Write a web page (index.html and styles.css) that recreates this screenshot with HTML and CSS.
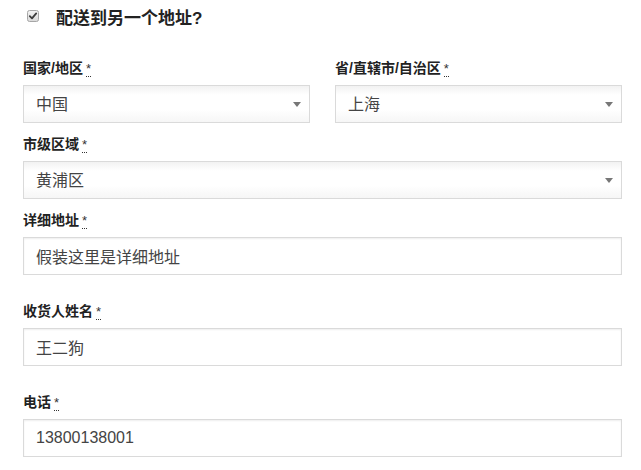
FILE: index.html
```html
<!DOCTYPE html>
<html lang="zh-CN">
<head>
    <meta charset="UTF-8">
    <meta name="viewport" content="width=device-width, initial-scale=1.0">
    <title>配送地址</title>
    <link rel="stylesheet" href="styles.css">
</head>
<body>
    <div class="shipping">
        <h3 class="ship-toggle">
            <label class="ship-check">
                <span class="checkbox">
                    <svg width="12" height="12" viewBox="0 0 12 12">
                        <defs>
                            <linearGradient id="cb" x1="0" y1="0" x2="0" y2="1">
                                <stop offset="0" stop-color="#f4f4f4"/>
                                <stop offset="1" stop-color="#d9d9d9"/>
                            </linearGradient>
                        </defs>
                        <rect x="0.5" y="0.5" width="11" height="11" rx="2" fill="url(#cb)" stroke="#a6a6a6"/>
                        <path d="M2.8 6.2 L5 8.4 L9.2 3.4" fill="none" stroke="#3c3c3c" stroke-width="1.8" stroke-linecap="round" stroke-linejoin="round"/>
                    </svg>
                </span>
                <span>配送到另一个地址?</span>
            </label>
        </h3>

        <form class="fields">
            <div class="row-two">
                <div class="field">
                    <label for="country">国家/地区<abbr class="required" title="必填">*</abbr></label>
                    <div class="select">
                        <select id="country"><option>中国</option></select>
                    </div>
                </div>
                <div class="field">
                    <label for="state">省/直辖市/自治区<abbr class="required" title="必填">*</abbr></label>
                    <div class="select">
                        <select id="state"><option>上海</option></select>
                    </div>
                </div>
            </div>

            <div class="field">
                <label for="city">市级区域<abbr class="required" title="必填">*</abbr></label>
                <div class="select">
                    <select id="city"><option>黄浦区</option></select>
                </div>
            </div>

            <div class="field field-wide">
                <label for="address">详细地址<abbr class="required" title="必填">*</abbr></label>
                <input type="text" id="address" value="假装这里是详细地址">
            </div>

            <div class="field field-wide">
                <label for="name">收货人姓名<abbr class="required" title="必填">*</abbr></label>
                <input type="text" id="name" value="王二狗">
            </div>

            <div class="field">
                <label for="phone">电话<abbr class="required" title="必填">*</abbr></label>
                <input type="text" id="phone" value="13800138001">
            </div>
        </form>
    </div>
</body>
</html>
```

FILE: styles.css
```css
body {
    margin: 0;
    font-family: "Liberation Sans", "Noto Sans CJK SC", sans-serif;
    color: #333;
    background: #fff;
}
.shipping {
    padding: 0 19px 0 23px;
}
.ship-toggle {
    margin: 0 0 26px;
    height: 32px;
    display: flex;
    align-items: center;
    font-size: 17px;
    font-weight: bold;
    color: #222;
}
.ship-check {
    display: flex;
    align-items: center;
    gap: 17px;
}
.checkbox {
    display: flex;
    margin-left: 4px;
}
.row-two {
    display: grid;
    grid-template-columns: 1fr 1fr;
    column-gap: 25px;
}
.field {
    margin-bottom: 11px;
}
.field-wide {
    margin-bottom: 26px;
}
.field label {
    display: block;
    height: 20px;
    font-size: 14px;
    font-weight: bold;
    line-height: 20px;
    margin-bottom: 7px;
    color: #222;
    white-space: nowrap;
}
abbr.required {
    margin-left: 3px;
    text-decoration: none;
    border-bottom: 1px dotted #333;
    font-weight: normal;
    font-size: 13px;
    line-height: 1;
    color: #333;
}
.select {
    position: relative;
}
.select::after {
    content: "";
    position: absolute;
    right: 9px;
    top: 17px;
    border-left: 4px solid transparent;
    border-right: 4px solid transparent;
    border-top: 5px solid #777;
}
.select select, .field input {
    display: block;
    width: 100%;
    height: 38px;
    box-sizing: border-box;
    padding: 0 12px;
    font-family: "Liberation Sans", "Noto Sans CJK SC", sans-serif;
    font-size: 16px;
    color: #444;
    border: 1px solid #dadada;
    border-radius: 0;
    outline: none;
}
.select select {
    appearance: none;
    -webkit-appearance: none;
    background: linear-gradient(to bottom, #f2f2f2 0%, #fff 25%, #fff 65%, #f6f6f6 100%);
}
.field input {
    background: #fff;
    box-shadow: inset 0 1px 2px rgba(0, 0, 0, 0.07);
}
```
